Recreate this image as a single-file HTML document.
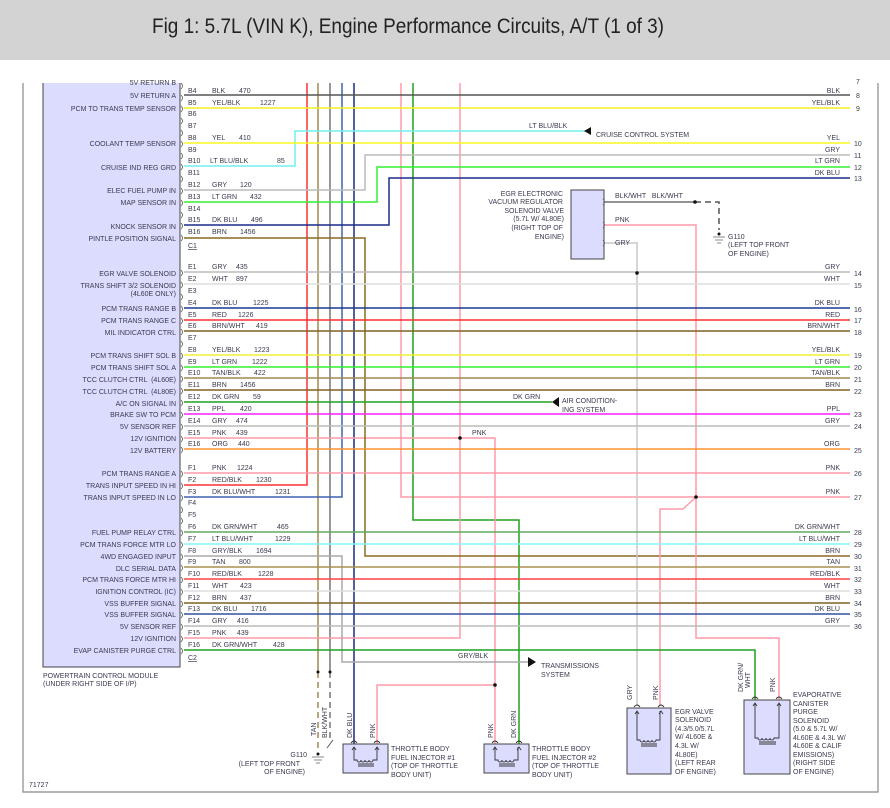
<!DOCTYPE html>
<html><head><meta charset="utf-8"><style>
html,body{margin:0;padding:0;background:#fff;width:890px;height:808px;overflow:hidden}
.hd{position:absolute;left:0;top:0;width:890px;height:60px;background:#d3d3d3}
svg{position:absolute;left:0;top:0}
text{font-family:"Liberation Sans",sans-serif;font-size:7px;fill:#3a3a50}
.e{text-anchor:end}
.w{fill:none;stroke-width:1.5}
</style></head><body>
<div class="hd"></div>
<svg width="890" height="808" viewBox="0 0 890 808">
<text x="152" y="33" textLength="512" lengthAdjust="spacingAndGlyphs" style="font-size:21px;fill:#222">Fig 1: 5.7L (VIN K), Engine Performance Circuits, A/T (1 of 3)</text>
<!-- frame -->
<path d="M23,83V792H878V83" fill="none" stroke="#888" stroke-width="1.2"/>
<!-- PCM -->
<rect x="43" y="80" width="137" height="587" fill="#dcdcff" stroke="#444" stroke-width="1"/>
<rect x="0" y="60" width="890" height="23" fill="#fff"/>
<!-- verticals -->
<g class="w">
<path d="M307,83V485H184" stroke="#ff3030"/>
<path d="M318,83V672" stroke="#a08850"/>
<path d="M330,83V672" stroke="#777"/>
<path d="M342,83V497H184" stroke="#4060b0"/>
<path d="M354,83V766" stroke="#1a2a80"/>
<path d="M401,83V497H850" stroke="#ff9aaa"/>
<path d="M413,83V520H519V766" stroke="#20a020"/>
<path d="M460,83V638H184" stroke="#ff9aaa"/>
<path d="M184,438H495V766" stroke="#ff9aaa"/>
<path d="M495,685H377V766" stroke="#ff9aaa"/>
<path d="M184,238H365V556H850" stroke="#8a6a20"/>
<path d="M184,190H365V155H850" stroke="#bbb"/>
<path d="M184,202H377V167H850" stroke="#30f030"/>
<path d="M184,225H389V178H850" stroke="#1a2a8a"/>
<path d="M184,166H295V131H585" stroke="#70f0f0"/>
<path d="M184,556H342V662H528" stroke="#aaa"/>
<path d="M604,243H637V706" stroke="#c8c8c8"/>
<path d="M604,225H696V638H779V700" stroke="#ff9aaa"/>
<path d="M696,497L683,509H660V706" stroke="#ff9aaa"/>
<path d="M184,650H755V700" stroke="#20a020"/>
<path d="M184,402H552" stroke="#20a020"/>
<path d="M604,202H695" stroke="#555" stroke-width="1.2"/>
</g>
<path d="M695,202H719V230" fill="none" stroke="#555" stroke-width="1.5" stroke-dasharray="6,4"/>
<path d="M318,672V752" fill="none" stroke="#a08850" stroke-width="1.5" stroke-dasharray="6,4"/>
<path d="M330,672V738" fill="none" stroke="#777" stroke-width="1.5" stroke-dasharray="6,4"/>
<path d="M333,740L327,748" stroke="#555" stroke-width="1"/>
<!-- horizontals -->
<g class="w">
<path d="M184,95H850" stroke="#555"/>
<path d="M184,108H850" stroke="#f0f020"/>
<path d="M184,143H850" stroke="#f8f820"/>
<path d="M184,272H850" stroke="#bbb"/>
<path d="M184,284H850" stroke="#ddd"/>
<path d="M184,308H850" stroke="#1a3a90"/>
<path d="M184,320H850" stroke="#ff3030"/>
<path d="M184,331H850" stroke="#806020"/>
<path d="M184,355H850" stroke="#f0f030"/>
<path d="M184,367H850" stroke="#30f030"/>
<path d="M184,378H850" stroke="#a08850"/>
<path d="M184,390H850" stroke="#806020"/>
<path d="M184,414H850" stroke="#ff20ff"/>
<path d="M184,426H850" stroke="#bbb"/>
<path d="M184,449H850" stroke="#ff9030"/>
<path d="M184,473H850" stroke="#ff9aaa"/>
<path d="M184,532H850" stroke="#60a860"/>
<path d="M184,544H850" stroke="#80f8f8"/>
<path d="M184,567H850" stroke="#a89050"/>
<path d="M184,579H850" stroke="#ff4040"/>
<path d="M184,591H850" stroke="#ddd"/>
<path d="M184,603H850" stroke="#806020"/>
<path d="M184,614H850" stroke="#3050a0"/>
<path d="M184,626H850" stroke="#bbb"/>
</g>
<!-- dots -->
<g fill="#111">
<circle cx="460" cy="438" r="1.8"/><circle cx="495" cy="685" r="1.8"/><circle cx="637" cy="273" r="1.8"/>
<circle cx="696" cy="497" r="1.8"/><circle cx="695" cy="202" r="1.8"/><circle cx="318" cy="672" r="1.5"/><circle cx="330" cy="672" r="1.5"/>
<circle cx="318" cy="754" r="1.5"/><circle cx="719" cy="234" r="1.5"/>
</g>
<!-- grounds -->
<path d="M713,237h12M715,240h8M717,243h4M312,757h12M314,760h8M316,763h4" stroke="#888" stroke-width="1"/>
<!-- arrows -->
<path d="M584,131l7,-4v8z" fill="#111"/>
<path d="M552,402l7,-5v10z" fill="#111"/>
<path d="M536,662l-8,-5v10z" fill="#111"/>
<!-- connectors on PCM -->
<g fill="none" stroke="#555" stroke-width="0.8">
<path d="M181,83q3,3 0,6M181,95q3,3 0,6M181,106q3,3 0,6M181,118q3,3 0,6M181,130q3,3 0,6M181,141q3,3 0,6M181,153q3,3 0,6M181,164q3,3 0,6M181,176q3,3 0,6M181,188q3,3 0,6M181,200q3,3 0,6M181,212q3,3 0,6M181,223q3,3 0,6M181,235q3,3 0,6M181,270q3,3 0,6M181,282q3,3 0,6M181,294q3,3 0,6M181,306q3,3 0,6M181,318q3,3 0,6M181,329q3,3 0,6M181,341q3,3 0,6M181,353q3,3 0,6M181,365q3,3 0,6M181,376q3,3 0,6M181,388q3,3 0,6M181,400q3,3 0,6M181,412q3,3 0,6M181,424q3,3 0,6M181,436q3,3 0,6M181,447q3,3 0,6M181,471q3,3 0,6M181,483q3,3 0,6M181,495q3,3 0,6M181,507q3,3 0,6M181,518q3,3 0,6M181,530q3,3 0,6M181,542q3,3 0,6M181,554q3,3 0,6M181,565q3,3 0,6M181,577q3,3 0,6M181,589q3,3 0,6M181,601q3,3 0,6M181,612q3,3 0,6M181,624q3,3 0,6M181,636q3,3 0,6M181,648q3,3 0,6"/>
</g>
<!-- left labels -->
<g class="e">
<text class="e" x="176" y="85">5V RETURN B</text>
<text class="e" x="176" y="98">5V RETURN A</text>
<text class="e" x="176" y="111">PCM TO TRANS TEMP SENSOR</text>
<text class="e" x="176" y="146">COOLANT TEMP SENSOR</text>
<text class="e" x="176" y="170">CRUISE IND REG GRD</text>
<text class="e" x="176" y="193">ELEC FUEL PUMP IN</text>
<text class="e" x="176" y="205">MAP SENSOR IN</text>
<text class="e" x="176" y="229">KNOCK SENSOR IN</text>
<text class="e" x="176" y="241">PINTLE POSITION SIGNAL</text>
<text class="e" x="176" y="276">EGR VALVE SOLENOID</text>
<text class="e" x="176" y="288">TRANS SHIFT 3/2 SOLENOID</text>
<text class="e" x="176" y="296">(4L60E ONLY)</text>
<text class="e" x="176" y="311">PCM TRANS RANGE B</text>
<text class="e" x="176" y="323">PCM TRANS RANGE C</text>
<text class="e" x="176" y="335">MIL INDICATOR CTRL</text>
<text class="e" x="176" y="358">PCM TRANS SHIFT SOL B</text>
<text class="e" x="176" y="370">PCM TRANS SHIFT SOL A</text>
<text class="e" x="176" y="382">TCC CLUTCH CTRL &#160;(4L60E)</text>
<text class="e" x="176" y="394">TCC CLUTCH CTRL &#160;(4L80E)</text>
<text class="e" x="176" y="406">A/C ON SIGNAL IN</text>
<text class="e" x="176" y="417">BRAKE SW TO PCM</text>
<text class="e" x="176" y="429">5V SENSOR REF</text>
<text class="e" x="176" y="441">12V IGNITION</text>
<text class="e" x="176" y="453">12V BATTERY</text>
<text class="e" x="176" y="476">PCM TRANS RANGE A</text>
<text class="e" x="176" y="488">TRANS INPUT SPEED IN HI</text>
<text class="e" x="176" y="500">TRANS INPUT SPEED IN LO</text>
<text class="e" x="176" y="535">FUEL PUMP RELAY CTRL</text>
<text class="e" x="176" y="547">PCM TRANS FORCE MTR LO</text>
<text class="e" x="176" y="559">4WD ENGAGED INPUT</text>
<text class="e" x="176" y="571">DLC SERIAL DATA</text>
<text class="e" x="176" y="582">PCM TRANS FORCE MTR HI</text>
<text class="e" x="176" y="594">IGNITION CONTROL (IC)</text>
<text class="e" x="176" y="606">VSS BUFFER SIGNAL</text>
<text class="e" x="176" y="617">VSS BUFFER SIGNAL</text>
<text class="e" x="176" y="629">5V SENSOR REF</text>
<text class="e" x="176" y="641">12V IGNITION</text>
<text class="e" x="176" y="653">EVAP CANISTER PURGE CTRL</text>
</g>
<!-- pin labels -->
<g>
<text x="188" y="93">B4</text><text x="212" y="93">BLK</text><text x="239" y="93">470</text>
<text x="188" y="105">B5</text><text x="212" y="105">YEL/BLK</text><text x="260" y="105">1227</text>
<text x="188" y="116">B6</text>
<text x="188" y="128">B7</text>
<text x="188" y="140">B8</text><text x="212" y="140">YEL</text><text x="239" y="140">410</text>
<text x="188" y="152">B9</text>
<text x="188" y="163">B10</text><text x="210" y="163">LT BLU/BLK</text><text x="277" y="163">85</text>
<text x="188" y="175">B11</text>
<text x="188" y="187">B12</text><text x="212" y="187">GRY</text><text x="240" y="187">120</text>
<text x="188" y="199">B13</text><text x="212" y="199">LT GRN</text><text x="250" y="199">432</text>
<text x="188" y="211">B14</text>
<text x="188" y="222">B15</text><text x="212" y="222">DK BLU</text><text x="251" y="222">496</text>
<text x="188" y="234">B16</text><text x="212" y="234">BRN</text><text x="240" y="234">1456</text>
<text x="188" y="248" text-decoration="underline">C1</text>
<text x="188" y="269">E1</text><text x="212" y="269">GRY</text><text x="236" y="269">435</text>
<text x="188" y="281">E2</text><text x="212" y="281">WHT</text><text x="236" y="281">897</text>
<text x="188" y="293">E3</text>
<text x="188" y="305">E4</text><text x="212" y="305">DK BLU</text><text x="253" y="305">1225</text>
<text x="188" y="317">E5</text><text x="212" y="317">RED</text><text x="238" y="317">1226</text>
<text x="188" y="328">E6</text><text x="212" y="328">BRN/WHT</text><text x="256" y="328">419</text>
<text x="188" y="340">E7</text>
<text x="188" y="352">E8</text><text x="212" y="352">YEL/BLK</text><text x="254" y="352">1223</text>
<text x="188" y="364">E9</text><text x="212" y="364">LT GRN</text><text x="252" y="364">1222</text>
<text x="188" y="375">E10</text><text x="212" y="375">TAN/BLK</text><text x="254" y="375">422</text>
<text x="188" y="387">E11</text><text x="212" y="387">BRN</text><text x="240" y="387">1456</text>
<text x="188" y="399">E12</text><text x="212" y="399">DK GRN</text><text x="253" y="399">59</text>
<text x="188" y="411">E13</text><text x="212" y="411">PPL</text><text x="240" y="411">420</text>
<text x="188" y="423">E14</text><text x="212" y="423">GRY</text><text x="236" y="423">474</text>
<text x="188" y="435">E15</text><text x="212" y="435">PNK</text><text x="236" y="435">439</text>
<text x="188" y="446">E16</text><text x="212" y="446">ORG</text><text x="238" y="446">440</text>
<text x="188" y="470">F1</text><text x="212" y="470">PNK</text><text x="237" y="470">1224</text>
<text x="188" y="482">F2</text><text x="212" y="482">RED/BLK</text><text x="256" y="482">1230</text>
<text x="188" y="494">F3</text><text x="212" y="494">DK BLU/WHT</text><text x="275" y="494">1231</text>
<text x="188" y="505">F4</text>
<text x="188" y="517">F5</text>
<text x="188" y="529">F6</text><text x="212" y="529">DK GRN/WHT</text><text x="277" y="529">465</text>
<text x="188" y="541">F7</text><text x="212" y="541">LT BLU/WHT</text><text x="275" y="541">1229</text>
<text x="188" y="553">F8</text><text x="212" y="553">GRY/BLK</text><text x="256" y="553">1694</text>
<text x="188" y="564">F9</text><text x="212" y="564">TAN</text><text x="239" y="564">800</text>
<text x="188" y="576">F10</text><text x="212" y="576">RED/BLK</text><text x="258" y="576">1228</text>
<text x="188" y="588">F11</text><text x="212" y="588">WHT</text><text x="240" y="588">423</text>
<text x="188" y="600">F12</text><text x="212" y="600">BRN</text><text x="240" y="600">437</text>
<text x="188" y="611">F13</text><text x="212" y="611">DK BLU</text><text x="251" y="611">1716</text>
<text x="188" y="623">F14</text><text x="212" y="623">GRY</text><text x="237" y="623">416</text>
<text x="188" y="635">F15</text><text x="212" y="635">PNK</text><text x="237" y="635">439</text>
<text x="188" y="647">F16</text><text x="212" y="647">DK GRN/WHT</text><text x="273" y="647">428</text>
<text x="188" y="660" text-decoration="underline">C2</text>
</g>
<!-- right labels -->
<g>
<text class="e" x="840" y="93">BLK</text><text x="856" y="98">8</text><text x="856" y="84">7</text>
<text class="e" x="840" y="105">YEL/BLK</text><text x="856" y="111">9</text>
<text class="e" x="840" y="140">YEL</text><text x="854" y="146">10</text>
<text class="e" x="840" y="152">GRY</text><text x="854" y="158">11</text>
<text class="e" x="840" y="163">LT GRN</text><text x="854" y="170">12</text>
<text class="e" x="840" y="175">DK BLU</text><text x="854" y="181">13</text>
<text class="e" x="840" y="269">GRY</text><text x="854" y="276">14</text>
<text class="e" x="840" y="281">WHT</text><text x="854" y="288">15</text>
<text class="e" x="840" y="305">DK BLU</text><text x="854" y="312">16</text>
<text class="e" x="840" y="317">RED</text><text x="854" y="323">17</text>
<text class="e" x="840" y="328">BRN/WHT</text><text x="854" y="335">18</text>
<text class="e" x="840" y="352">YEL/BLK</text><text x="854" y="358">19</text>
<text class="e" x="840" y="364">LT GRN</text><text x="854" y="370">20</text>
<text class="e" x="840" y="375">TAN/BLK</text><text x="854" y="382">21</text>
<text class="e" x="840" y="387">BRN</text><text x="854" y="394">22</text>
<text class="e" x="840" y="411">PPL</text><text x="854" y="417">23</text>
<text class="e" x="840" y="423">GRY</text><text x="854" y="429">24</text>
<text class="e" x="840" y="446">ORG</text><text x="854" y="453">25</text>
<text class="e" x="840" y="470">PNK</text><text x="854" y="476">26</text>
<text class="e" x="840" y="494">PNK</text><text x="854" y="500">27</text>
<text class="e" x="840" y="529">DK GRN/WHT</text><text x="854" y="535">28</text>
<text class="e" x="840" y="541">LT BLU/WHT</text><text x="854" y="547">29</text>
<text class="e" x="840" y="553">BRN</text><text x="854" y="559">30</text>
<text class="e" x="840" y="564">TAN</text><text x="854" y="571">31</text>
<text class="e" x="840" y="576">RED/BLK</text><text x="854" y="582">32</text>
<text class="e" x="840" y="588">WHT</text><text x="854" y="594">33</text>
<text class="e" x="840" y="600">BRN</text><text x="854" y="606">34</text>
<text class="e" x="840" y="611">DK BLU</text><text x="854" y="617">35</text>
<text class="e" x="840" y="623">GRY</text><text x="854" y="629">36</text>
</g>
<!-- misc labels -->
<text x="529" y="128">LT BLU/BLK</text>
<text x="596" y="137">CRUISE CONTROL SYSTEM</text>
<text x="513" y="399">DK GRN</text>
<text x="562" y="403">AIR CONDITION-</text>
<text x="562" y="412">ING SYSTEM</text>
<text x="472" y="435">PNK</text>
<text x="458" y="658">GRY/BLK</text>
<text x="541" y="668">TRANSMISSIONS</text>
<text x="541" y="677">SYSTEM</text>
<text x="43" y="678">POWERTRAIN CONTROL MODULE</text>
<text x="43" y="686">(UNDER RIGHT SIDE OF I/P)</text>
<text x="29" y="787">71727</text>
<text class="e" x="307" y="757">G110</text>
<text class="e" x="300" y="766">(LEFT TOP FRONT</text>
<text class="e" x="305" y="774">OF ENGINE)</text>
<!-- EGR vac reg -->
<rect x="571" y="190" width="33" height="69" fill="#dcdcff" stroke="#444"/>
<path d="M603,199q3,3 0,6M603,222q3,3 0,6M603,240q3,3 0,6" fill="none" stroke="#555" stroke-width="0.8"/>
<text x="615" y="198">BLK/WHT &#160; BLK/WHT</text>
<text x="615" y="222">PNK</text>
<text x="615" y="245">GRY</text>
<text class="e" x="563" y="196">EGR ELECTRONIC</text>
<text class="e" x="563" y="204">VACUUM REGULATOR</text>
<text class="e" x="564" y="213">SOLENOID VALVE</text>
<text class="e" x="564" y="221">(5.7L W/ 4L80E)</text>
<text class="e" x="563" y="230">(RIGHT TOP OF</text>
<text class="e" x="564" y="239">ENGINE)</text>
<text x="728" y="239">G110</text>
<text x="728" y="247">(LEFT TOP FRONT</text>
<text x="728" y="256">OF ENGINE)</text>
<!-- component boxes -->
<g stroke="#444" fill="#dcdcff">
<rect x="343" y="744" width="45" height="29"/>
<rect x="484" y="744" width="45" height="29"/>
<rect x="627" y="708" width="44" height="66"/>
<rect x="744" y="700" width="46" height="74"/>
</g>
<g fill="none" stroke="#333" stroke-width="0.9">
<path d="M354,747V760h3a2,2 0 0 0 4,0a2,2 0 0 0 4,0a2,2 0 0 0 4,0a2,2 0 0 0 4,0h4V747M358,764h16M358,766h16"/>
<path d="M495,747V760h3a2,2 0 0 0 4,0a2,2 0 0 0 4,0a2,2 0 0 0 4,0a2,2 0 0 0 4,0h4V747M499,764h16M499,766h16"/>
<path d="M637,711V740h3a2,2 0 0 0 4,0a2,2 0 0 0 4,0a2,2 0 0 0 4,0a2,2 0 0 0 4,0h4V711M641,744h16M641,746h16"/>
<path d="M755,703V738h3a2,2 0 0 0 4,0a2,2 0 0 0 4,0a2,2 0 0 0 4,0a2,2 0 0 0 4,0h5V703M759,742h17M759,744h17"/>
<path d="M351,743q3,-4 6,0M374,743q3,-4 6,0M492,743q3,-4 6,0M516,743q3,-4 6,0M634,707q3,-4 6,0M658,707q3,-4 6,0M752,699q3,-4 6,0M776,699q3,-4 6,0"/>
<path d="M352,750l2,-3l2,3M375,750l2,-3l2,3M493,750l2,-3l2,3M517,750l2,-3l2,3M635,714l2,-3l2,3M659,714l2,-3l2,3M753,706l2,-3l2,3M777,706l2,-3l2,3"/>
</g>
<text x="391" y="751">THROTTLE BODY</text>
<text x="391" y="760">FUEL INJECTOR #1</text>
<text x="391" y="768">(TOP OF THROTTLE</text>
<text x="391" y="777">BODY UNIT)</text>
<text x="532" y="751">THROTTLE BODY</text>
<text x="532" y="760">FUEL INJECTOR #2</text>
<text x="532" y="768">(TOP OF THROTTLE</text>
<text x="532" y="777">BODY UNIT)</text>
<text x="675" y="714">EGR VALVE</text>
<text x="675" y="722">SOLENOID</text>
<text x="675" y="731">(4.3/5.0/5.7L</text>
<text x="675" y="739">W/ 4L60E &amp;</text>
<text x="675" y="748">4.3L W/</text>
<text x="675" y="757">4L80E)</text>
<text x="675" y="765">(LEFT REAR</text>
<text x="675" y="774">OF ENGINE)</text>
<text x="793" y="697">EVAPORATIVE</text>
<text x="793" y="706">CANISTER</text>
<text x="793" y="714">PURGE</text>
<text x="793" y="723">SOLENOID</text>
<text x="793" y="731">(5.0 &amp; 5.7L W/</text>
<text x="793" y="740">4L60E &amp; 4.3L W/</text>
<text x="793" y="748">4L60E &amp; CALIF</text>
<text x="793" y="757">EMISSIONS)</text>
<text x="793" y="765">(RIGHT SIDE</text>
<text x="793" y="774">OF ENGINE)</text>
<!-- vertical labels -->
<g>
<text transform="translate(316,736) rotate(-90)">TAN</text>
<text transform="translate(327,738) rotate(-90)">BLK/WHT</text>
<text transform="translate(352,738) rotate(-90)">DK BLU</text>
<text transform="translate(375,738) rotate(-90)">PNK</text>
<text transform="translate(493,738) rotate(-90)">PNK</text>
<text transform="translate(516,738) rotate(-90)">DK GRN</text>
<text transform="translate(632,700) rotate(-90)">GRY</text>
<text transform="translate(658,700) rotate(-90)">PNK</text>
<text transform="translate(743,692) rotate(-90)">DK GRN/</text>
<text transform="translate(750,688) rotate(-90)">WHT</text>
<text transform="translate(775,692) rotate(-90)">PNK</text>
</g>
</svg>
</body></html>
